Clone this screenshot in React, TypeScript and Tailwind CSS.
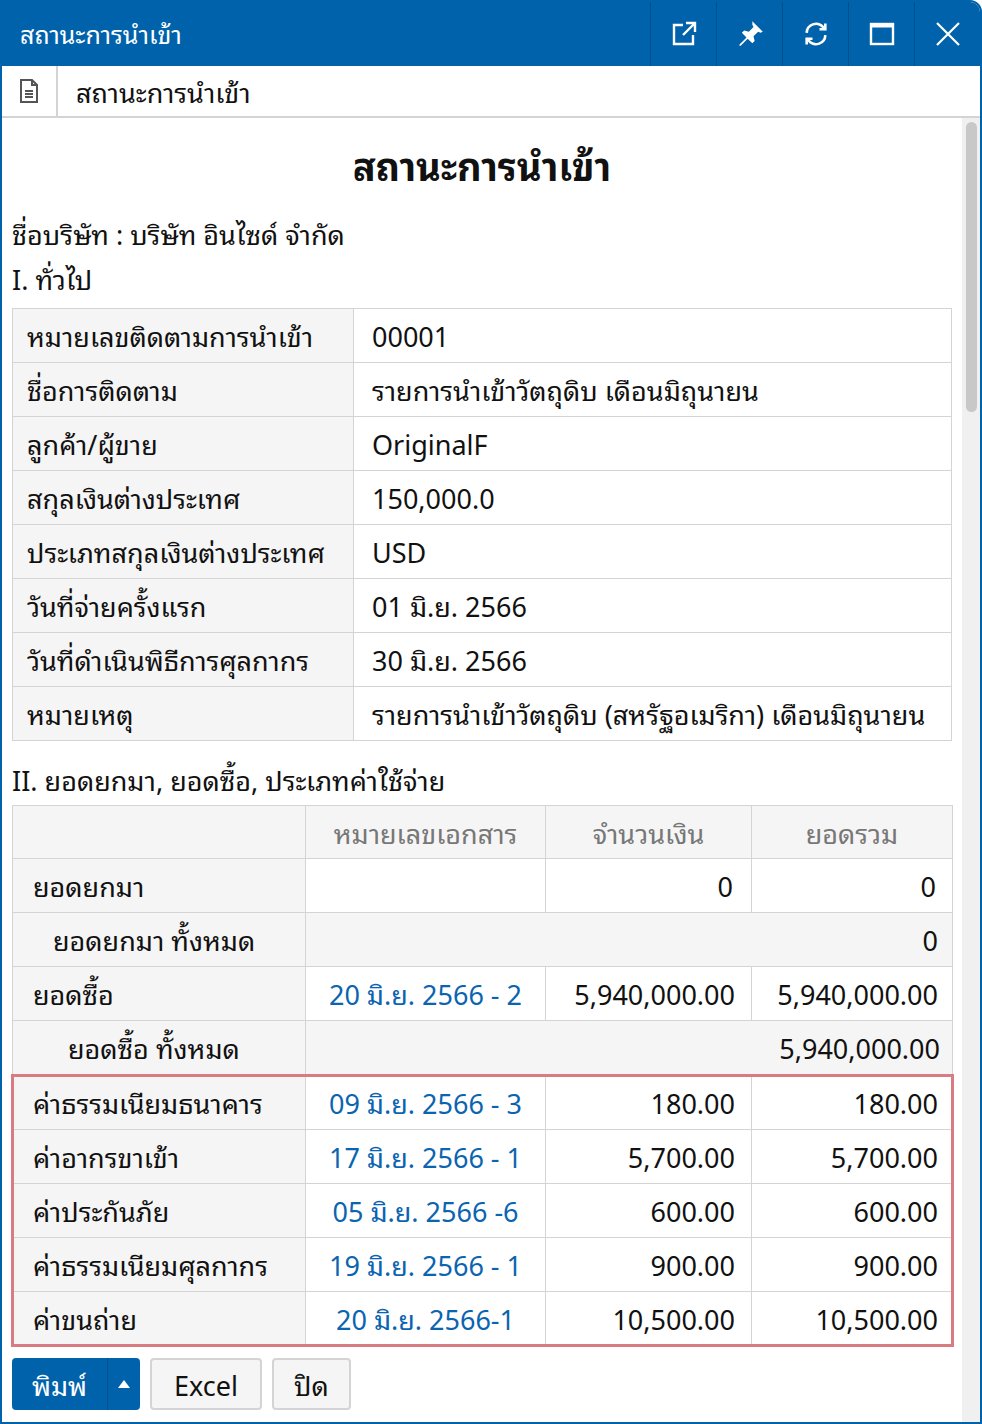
import React from "react";

const F = { fontFamily: '"Noto Sans Thai Looped","Noto Sans","Noto Sans Thai",sans-serif' };

const info: [string, string][] = [
  ["หมายเลขติดตามการนำเข้า", "00001"],
  ["ชื่อการติดตาม", "รายการนำเข้าวัตถุดิบ เดือนมิถุนายน"],
  ["ลูกค้า/ผู้ขาย", "OriginalF"],
  ["สกุลเงินต่างประเทศ", "150,000.0"],
  ["ประเภทสกุลเงินต่างประเทศ", "USD"],
  ["วันที่จ่ายครั้งแรก", "01 มิ.ย. 2566"],
  ["วันที่ดำเนินพิธีการศุลกากร", "30 มิ.ย. 2566"],
  ["หมายเหตุ", "รายการนำเข้าวัตถุดิบ (สหรัฐอเมริกา) เดือนมิถุนายน"],
];

const exp: [string, string, string][] = [
  ["ค่าธรรมเนียมธนาคาร", "09 มิ.ย. 2566 - 3", "180.00"],
  ["ค่าอากรขาเข้า", "17 มิ.ย. 2566 - 1", "5,700.00"],
  ["ค่าประกันภัย", "05 มิ.ย. 2566 -6", "600.00"],
  ["ค่าธรรมเนียมศุลกากร", "19 มิ.ย. 2566 - 1", "900.00"],
  ["ค่าขนถ่าย", "20 มิ.ย. 2566-1", "10,500.00"],
];

const bd = "border border-[#d4d4d4]";

export default function App() {
  return (
    <div style={F} className="w-[982px] h-[1424px] bg-white border-2 border-[#0062ab] rounded-tr-[12px] flex flex-col overflow-hidden text-[#111]">
      <div className="h-[64px] bg-[#0062ab] flex items-center shrink-0">
        <div className="flex-1 pl-[18px] text-white text-[25px]">สถานะการนำเข้า</div>
        {[0, 1, 2, 3, 4].map((i) => (
          <div key={i} className="w-[66px] h-full flex items-center justify-center border-l border-[#00508e] text-white">
            {i === 0 && (
              <svg width="26" height="26" viewBox="0 0 26 26" fill="none" stroke="white" strokeWidth="2.4"><path d="M12 4H3v19h19v-9" /><path d="M15 2h9v9M24 2L12 14" /></svg>
            )}
            {i === 1 && (
              <svg width="28" height="28" viewBox="0 0 24 24" fill="white"><path d="M14 1l9 9-2 1-2-1-4 4 1 4-2 2-4-4-6 6-1 0 0-1 6-6-4-4 2-2 4 1 4-4-1-2z" /></svg>
            )}
            {i === 2 && (
              <svg width="28" height="28" viewBox="0 0 24 24" fill="none" stroke="white" strokeWidth="2.2"><path d="M4 11a8 8 0 0 1 14-5l2 2" /><path d="M20 3v5h-5" /><path d="M20 13a8 8 0 0 1-14 5l-2-2" /><path d="M4 21v-5h5" /></svg>
            )}
            {i === 3 && (
              <svg width="26" height="26" viewBox="0 0 26 26" fill="none" stroke="white"><rect x="2" y="3" width="22" height="20" strokeWidth="2.4" /><rect x="2" y="3" width="22" height="3" fill="white" /></svg>
            )}
            {i === 4 && (
              <svg width="26" height="26" viewBox="0 0 26 26" stroke="white" strokeWidth="2.2"><path d="M2 2l22 22M24 2L2 24" /></svg>
            )}
          </div>
        ))}
      </div>
      <div className="h-[52px] flex items-stretch border-b-2 border-[#d4d4d4] shrink-0">
        <div className="w-[56px] flex items-center justify-center border-r-2 border-[#d4d4d4]">
          <svg width="20" height="24" viewBox="0 0 20 24" fill="none" stroke="#555" strokeWidth="2"><path d="M2 1h11l5 5v17H2z" /><path d="M13 1v5h5" /><path d="M6 12h8M6 15h8M6 18h8" /></svg>
        </div>
        <div className="flex items-center pl-[18px] text-[27px]">สถานะการนำเข้า</div>
      </div>
      <div className="flex-1 flex min-h-0">
        <div className="flex-1 flex flex-col min-w-0">
          <div className="flex-1 overflow-hidden px-[10px]">
            <h1 className="text-center font-bold text-[38px] mt-[22px] leading-[48px]">สถานะการนำเข้า</h1>
            <div className="text-[27px] leading-[46px] mt-[22px]">ชื่อบริษัท : บริษัท อินไซด์ จำกัด</div>
            <div className="text-[27px] leading-[44px] mb-[8px]">I. ทั่วไป</div>
            <table className="w-[940px] border-collapse text-[27px]">
              <tbody>
                {info.map(([a, b]) => (
                  <tr key={a} className="h-[54px]">
                    <td className={`${bd} bg-[#f5f5f5] w-[341px] px-[14px]`}>{a}</td>
                    <td className={`${bd} px-[18px]`}>{b}</td>
                  </tr>
                ))}
              </tbody>
            </table>
            <div className="text-[27px] leading-[40px] mt-[18px] mb-[6px]">II. ยอดยกมา, ยอดซื้อ, ประเภทค่าใช้จ่าย</div>
            <table className="w-[941px] border-collapse text-[27px]">
              <tbody>
                <tr className="h-[53px] bg-[#f5f5f5] text-[#777]">
                  <td className={`${bd} w-[293px]`}></td>
                  <td className={`${bd} w-[240px] text-center`}>หมายเลขเอกสาร</td>
                  <td className={`${bd} w-[206px] text-center`}>จำนวนเงิน</td>
                  <td className={`${bd} text-center`}>ยอดรวม</td>
                </tr>
                <tr className="h-[54px]">
                  <td className={`${bd} bg-[#f5f5f5] px-[20px]`}>ยอดยกมา</td>
                  <td className={bd}></td>
                  <td className={`${bd} text-right px-[18px]`}>0</td>
                  <td className={`${bd} text-right px-[16px]`}>0</td>
                </tr>
                <tr className="h-[54px] bg-[#f5f5f5]">
                  <td className={`${bd} px-[40px]`}>ยอดยกมา ทั้งหมด</td>
                  <td className={`${bd} text-right px-[14px]`} colSpan={3}>0</td>
                </tr>
                <tr className="h-[54px]">
                  <td className={`${bd} bg-[#f5f5f5] px-[20px]`}>ยอดซื้อ</td>
                  <td className={`${bd} text-center text-[#0a64b0]`}>20 มิ.ย. 2566 - 2</td>
                  <td className={`${bd} text-right px-[16px]`}>5,940,000.00</td>
                  <td className={`${bd} text-right px-[14px]`}>5,940,000.00</td>
                </tr>
                <tr className="h-[54px] bg-[#f5f5f5]">
                  <td className={`${bd} px-[55px]`}>ยอดซื้อ ทั้งหมด</td>
                  <td className={`${bd} text-right px-[12px]`} colSpan={3}>5,940,000.00</td>
                </tr>
              </tbody>
            </table>
            <table className="w-[941px] border-collapse text-[27px] outline-[3px] outline-[#d97b83] -outline-offset-[2px]">
              <tbody>
                {exp.map(([a, b, c]) => (
                  <tr key={a} className="h-[54px]">
                    <td className={`${bd} bg-[#f5f5f5] w-[293px] px-[20px]`}>{a}</td>
                    <td className={`${bd} w-[240px] text-center text-[#0a64b0]`}>{b}</td>
                    <td className={`${bd} w-[206px] text-right px-[16px]`}>{c}</td>
                    <td className={`${bd} text-right px-[14px]`}>{c}</td>
                  </tr>
                ))}
              </tbody>
            </table>
          </div>
          <div className="h-[72px] shrink-0 flex items-center gap-[10px] px-[10px] pb-[4px] text-[27px]">
            <div className="flex h-[52px] rounded-[4px] bg-[#0062ab] text-white">
              <div className="px-[20px] flex items-center border-r border-[#00508e]">พิมพ์</div>
              <div className="w-[32px] flex items-center justify-center">
                <svg width="14" height="10" viewBox="0 0 14 10" fill="white"><path d="M7 1l6 8H1z" /></svg>
              </div>
            </div>
            <div className="h-[52px] px-[22px] flex items-center rounded-[4px] border-2 border-[#d4d4d4] bg-[#f5f5f5]">Excel</div>
            <div className="h-[52px] px-[20px] flex items-center rounded-[4px] border-2 border-[#d4d4d4] bg-[#f5f5f5]">ปิด</div>
          </div>
        </div>
        <div className="w-[18px] bg-[#f0f0f0] shrink-0 pt-[4px] flex justify-center">
          <div className="w-[11px] h-[290px] bg-[#c8c8c8] rounded-full" />
        </div>
      </div>
    </div>
  );
}
